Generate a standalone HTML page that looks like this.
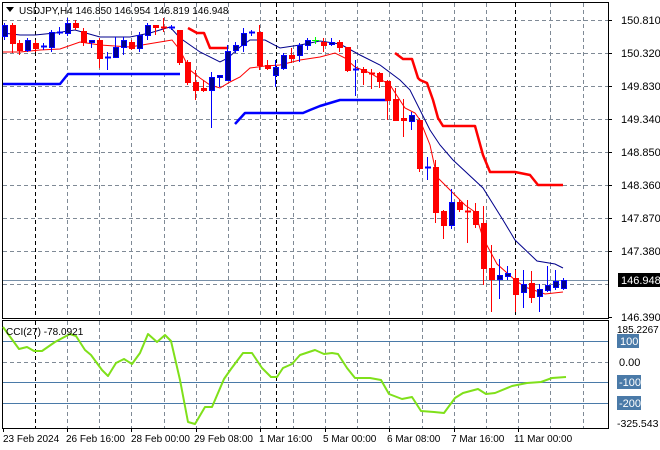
<!DOCTYPE html>
<html><head><meta charset="utf-8"><style>
html,body{margin:0;padding:0;background:#fff;width:660px;height:450px;overflow:hidden}
svg{display:block;font-family:"Liberation Sans",sans-serif}
</style></head><body>
<svg width="660" height="450" viewBox="0 0 660 450" xmlns="http://www.w3.org/2000/svg">
<rect width="660" height="450" fill="#fff"/>
<g stroke="#7f8a96" stroke-width="1" stroke-dasharray="4,3" fill="none">
<path d="M3 20.5H608M3 53.5H608M3 86.5H608M3 119.5H608M3 152.5H608M3 185.5H608M3 218.5H608M3 251.5H608M3 284.5H608"/>
<path d="M67.5 3V318M99.5 3V318M131.5 3V318M164.5 3V318M196.5 3V318M228.5 3V318M260.5 3V318M293.5 3V318M325.5 3V318M357.5 3V318M389.5 3V318M422.5 3V318M454.5 3V318M486.5 3V318M550.5 3V318M583.5 3V318"/>
<path d="M67.5 321V428M99.5 321V428M131.5 321V428M164.5 321V428M196.5 321V428M228.5 321V428M260.5 321V428M293.5 321V428M325.5 321V428M357.5 321V428M389.5 321V428M422.5 321V428M454.5 321V428M486.5 321V428M518.5 321V428M550.5 321V428M583.5 321V428"/>
<path d="M3 362.5H608"/>
</g>
<g stroke="#000" stroke-width="1" stroke-dasharray="4,3">
<path d="M35.5 3V318M276.5 3V318M515.5 3V318M35.5 321V428M276.5 321V428"/>
</g>
<path d="M3 280.5H608" stroke="#7890a8" stroke-width="1"/>
<g stroke="#4a7aa8" stroke-width="1"><path d="M3 341.5H608M3 382.5H608M3 403.5H608"/></g>
<g stroke="#000" fill="none" stroke-width="1">
<rect x="2.5" y="2.5" width="606" height="316"/>
<rect x="2.5" y="320.5" width="606" height="108"/>
</g>
<g fill="none" stroke-width="2.5" stroke-linejoin="round">
<polyline stroke="#0000ff" points="3,84 60,84 68,74 180,74"/>
<polyline stroke="#0000ff" points="235,124 245,113 303,113 310,110 320,106 340,100 387,100"/>
<polyline stroke="#ff0000" points="188,28 197,33 204,33 210,48 227,48"/>
<polyline stroke="#ff0000" points="395,53 403,59 412,59 418,78 420,80 427,83 433,100 438,118 443,126 475,126 483,155 490,172 515,172 530,175 538,185 563,185"/>
</g>
<g fill="none" stroke-width="1">
<polyline stroke="#00008b" points="3,33 20,35 35,35 55,33 75,30 100,37 130,37 150,33 170,27 180,38 200,52 220,62 228,58 240,47 250,40 265,40 280,48 300,45 320,41 340,44 360,55 380,65 400,80 410,90 420,110 430,130 440,145 453,160 483,188 503,220 515,240 537,261 555,264 563,268"/>
<polyline stroke="#ff0000" points="3,52 20,52 40,50 60,49 80,42 100,45 130,47 160,42 172,40 180,50 190,70 200,78 210,85 220,88 230,82 240,77 250,68 265,66 280,65 300,60 320,57 335,53 345,58 355,67 370,73 390,85 405,108 415,113 420,120 430,145 437,177 453,193 465,205 475,212 483,238 497,264 515,280 525,287 545,294 563,292"/>
</g>
<g>
<g stroke="#0000ff" fill="#00008b">
<path d="M4.5 23V40M27.5 38V52M43.5 43V50M51.5 30V52M59.5 27V35M67.5 18V36M91.5 40V48M107.5 52V70M115.5 37V58M123.5 37V55M139.5 32V52M147.5 23V40M171.5 25V30M211.5 72V128M219.5 75V87M227.5 45V80M235.5 42V53M243.5 28V52M251.5 30V36M275.5 60V87M283.5 53V70M299.5 43V62M307.5 38V50M331.5 38V46M355.5 60V96M411.5 112V130M427.5 157V180M451.5 189V229M499.5 259V299M507.5 266V280M523.5 270V308M539.5 284V312M547.5 266V292M555.5 270V290M563.5 278V290"/>
<rect x="2.5" y="25.5" width="5" height="11"/><rect x="25.5" y="40.5" width="5" height="10"/><rect x="41.5" y="46" width="5" height="1"/><rect x="49.5" y="32.5" width="5" height="15"/><rect x="57.5" y="32" width="5" height="1"/><rect x="65.5" y="23.5" width="5" height="10"/><rect x="89.5" y="40.5" width="5" height="2"/><rect x="105.5" y="57" width="5" height="1"/><rect x="113.5" y="47.5" width="5" height="10"/><rect x="121.5" y="40.5" width="5" height="7"/><rect x="137.5" y="35.5" width="5" height="13"/><rect x="145.5" y="25.5" width="5" height="10"/><rect x="169.5" y="27" width="5" height="1"/><rect x="209.5" y="77.5" width="5" height="13"/><rect x="217.5" y="75.5" width="5" height="2"/><rect x="225.5" y="51.5" width="5" height="29"/><rect x="233.5" y="45.5" width="5" height="5"/><rect x="241.5" y="33.5" width="5" height="12"/><rect x="249.5" y="32" width="5" height="1"/><rect x="273.5" y="67.5" width="5" height="8"/><rect x="281.5" y="55.5" width="5" height="13"/><rect x="297.5" y="45.5" width="5" height="10"/><rect x="305.5" y="40.5" width="5" height="5"/><rect x="329.5" y="42.5" width="5" height="2"/><rect x="353.5" y="69" width="5" height="1"/><rect x="409.5" y="115.5" width="5" height="6"/><rect x="425.5" y="167" width="5" height="1"/><rect x="449.5" y="202.5" width="5" height="23"/><rect x="497.5" y="275.5" width="5" height="4"/><rect x="505.5" y="273.5" width="5" height="3"/><rect x="521.5" y="284.5" width="5" height="8"/><rect x="537.5" y="289.5" width="5" height="7"/><rect x="545.5" y="285.5" width="5" height="5"/><rect x="553.5" y="281.5" width="5" height="6"/><rect x="561.5" y="280.5" width="5" height="8"/>
</g>
<g stroke="#ff0000" fill="#ff0000">
<path d="M12.5 23V53M19.5 40V55M35.5 40V52M75.5 20V30M83.5 28V46M99.5 38V68M131.5 40V50M155.5 25V35M163.5 18V32M179.5 30V65M187.5 60V85M195.5 70V100M203.5 80V92M259.5 25V70M267.5 60V70M291.5 48V63M323.5 38V52M339.5 40V52M347.5 47V72M363.5 67V85M371.5 69V89M379.5 72V88M387.5 80V120M395.5 88V120M403.5 99V137M419.5 118V172M435.5 160V223M443.5 210V239M459.5 200V212M467.5 200V243M475.5 203V228M483.5 206V285M491.5 245V312M515.5 270V312M531.5 271V303"/>
<rect x="10.5" y="25.5" width="5" height="18"/><rect x="17.5" y="43.5" width="5" height="7"/><rect x="33.5" y="43.5" width="5" height="5"/><rect x="73.5" y="23.5" width="5" height="4"/><rect x="81.5" y="31.5" width="5" height="11"/><rect x="97.5" y="40.5" width="5" height="18"/><rect x="129.5" y="42.5" width="5" height="6"/><rect x="153.5" y="25.5" width="5" height="2"/><rect x="161.5" y="27" width="5" height="1"/><rect x="177.5" y="30.5" width="5" height="32"/><rect x="185.5" y="62.5" width="5" height="20"/><rect x="193.5" y="82.5" width="5" height="8"/><rect x="201.5" y="88.5" width="5" height="2"/><rect x="257.5" y="32.5" width="5" height="33"/><rect x="265.5" y="65.5" width="5" height="3"/><rect x="289.5" y="55.5" width="5" height="3"/><rect x="321.5" y="42.5" width="5" height="3"/><rect x="337.5" y="42.5" width="5" height="5"/><rect x="345.5" y="47.5" width="5" height="23"/><rect x="361.5" y="69.5" width="5" height="3"/><rect x="369.5" y="73" width="5" height="1"/><rect x="377.5" y="73.5" width="5" height="8"/><rect x="385.5" y="81.5" width="5" height="19"/><rect x="393.5" y="99.5" width="5" height="21"/><rect x="401.5" y="118.5" width="5" height="2"/><rect x="417.5" y="120.5" width="5" height="48"/><rect x="433.5" y="167.5" width="5" height="45"/><rect x="441.5" y="211.5" width="5" height="14"/><rect x="457.5" y="202.5" width="5" height="7"/><rect x="465.5" y="211" width="5" height="1"/><rect x="473.5" y="211.5" width="5" height="13"/><rect x="481.5" y="223.5" width="5" height="45"/><rect x="489.5" y="268.5" width="5" height="11"/><rect x="513.5" y="278.5" width="5" height="16"/><rect x="529.5" y="283.5" width="5" height="14"/>
</g>
<path d="M312 40.5H319M315.5 37V44" stroke="#00ff00"/>
</g>
<polyline fill="none" stroke="#7fe01a" stroke-width="2" stroke-linejoin="round" points="3,327 19,349 27,347 34,351 42,351 55,342 70,334 76,336 85,350 91,355 102,370 108,376 116,363 124,359 132,364 140,353 148,334 157,342 165,335 171,341 180,380 188,422 195,424 205,407 212,407 224,379 231,369 243,353 252,353 262,368 271,377 277,377 283,368 292,364 300,355 315,350 324,354 332,353 338,354 347,368 355,378 370,378 381,380 389,394 402,399 412,397 421,411 434,412 444,413 455,398 463,393 478,389 486,394 495,393 512,386 527,383 541,382 552,378 566,377"/>
<path d="M6 7H14L10 12Z" fill="#000"/>
<text x="19" y="14" font-size="10" fill="#000">USDJPY,H4  146.850 146.954 146.819 146.948</text>
<text x="6" y="335" font-size="10" fill="#000">CCI(27) -78.0921</text>
<g font-size="11" fill="#000">
<path d="M608 20.5h4M608 53.5h4M608 86.5h4M608 119.5h4M608 152.5h4M608 185.5h4M608 218.5h4M608 251.5h4M608 317.5h4" stroke="#000"/>
<text x="621" y="24">150.810</text>
<text x="621" y="57">150.320</text>
<text x="621" y="90">149.830</text>
<text x="621" y="123">149.340</text>
<text x="621" y="156">148.850</text>
<text x="621" y="189">148.360</text>
<text x="621" y="222">147.870</text>
<text x="621" y="255">147.380</text>
<text x="621" y="321">146.390</text>
<rect x="618" y="273" width="42" height="14" fill="#000"/>
<text x="621" y="284" fill="#fff">146.948</text>
<text x="617" y="333" font-size="10">185.2267</text>
<rect x="617" y="334" width="22" height="14" fill="#4a7aa8"/>
<text x="620" y="345" fill="#fff">100</text>
<text x="619" y="366">0.00</text>
<rect x="617" y="375" width="24" height="14" fill="#4a7aa8"/>
<text x="619" y="386" fill="#fff">-100</text>
<rect x="617" y="396" width="24" height="14" fill="#4a7aa8"/>
<text x="619" y="407" fill="#fff">-200</text>
<text x="617" y="427" font-size="10.5">-325.543</text>
</g>
<g font-size="10" fill="#000">
<path d="M3.5 428v4M67.5 428v4M131.5 428v4M196.5 428v4M260.5 428v4M325.5 428v4M389.5 428v4M454.5 428v4M518.5 428v4" stroke="#000"/>
<text x="3" y="442">23 Feb 2024</text>
<text x="66" y="442">26 Feb 16:00</text>
<text x="131" y="442">28 Feb 00:00</text>
<text x="194" y="442">29 Feb 08:00</text>
<text x="259" y="442">1 Mar 16:00</text>
<text x="323" y="442">5 Mar 00:00</text>
<text x="387" y="442">6 Mar 08:00</text>
<text x="451" y="442">7 Mar 16:00</text>
<text x="514" y="442">11 Mar 00:00</text>
</g>
</svg>
</body></html>
